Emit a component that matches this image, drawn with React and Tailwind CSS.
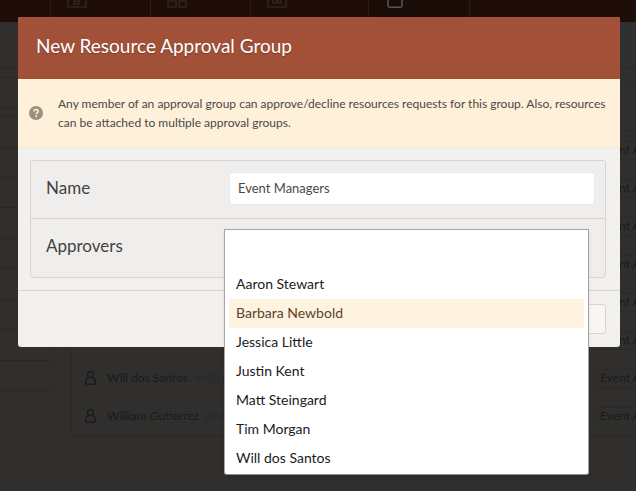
import React from "react";

const people = ["Aaron Stewart", "Barbara Newbold", "Jessica Little", "Justin Kent", "Matt Steingard", "Tim Morgan", "Will dos Santos"];

const rows = [
  {},
  {},
  {},
  {},
  {},
  {},
  { name: "Will dos Santos", email: "will@p" },
  { name: "William Gutierrez", email: "jlittl" },
];

const sideRows = ["h-[10px]", "h-[30px]", "h-[9px]", "h-[31px]", "h-[30px]", "h-[30px]", "h-[31px]", "h-[30px]", "h-[31px]", "h-[30px]", "h-[31px]", "h-[30px]", "h-[30px]"];

const UserIcon = () => (
  <svg width="11" height="14" viewBox="0 0 11 14" fill="none" stroke="#1a1918" strokeWidth="1.2" className="shrink-0">
    <ellipse cx="5.500" cy="3.600" rx="3" ry="3" />
    <path d="M3.200 6.800C1.500 7.600.6 8.800.6 10.700c0 1.600.8 2.700 2.200 2.700h5.400c1.400 0 2.200-1.100 2.200-2.700 0-1.900-.9-3.100-2.600-3.900" />
  </svg>
);

const TopIcon = ({ children, color = "#33241f", width = 20 }) => (
  <svg width={width} height="8" viewBox={`0 0 ${width} 8`} fill="none" stroke={color} strokeWidth="1.5">
    {children}
  </svg>
);

const HelpIcon = () => (
  <svg width="14" height="14" viewBox="0 0 14 14" className="shrink-0">
    <circle cx="7" cy="7" r="7" fill="#99917f" />
    <path d="M4.900 5.400c.1-1.200 1-1.900 2.200-1.900 1.200 0 2.100.7 2.100 1.800 0 1.700-2 1.500-2 3" fill="none" stroke="#fff0d9" strokeWidth="1.600" />
    <rect x="6.300" y="9.500" width="1.700" height="1.700" fill="#fff0d9" />
  </svg>
);

const Backdrop = () => (
  <div className="absolute inset-0 flex flex-col bg-[#302f2e]">
    {/* Top nav */}
    <div className="h-[22px] shrink-0 bg-[#1f0d07] flex">
      <div className="w-[51px] border-r border-[#2d1d17]" />
      <div className="w-[100px] border-r border-[#2d1d17] pl-[16px]">
        <TopIcon><path d="M1 0v7h18V0M7 1h5v3H7z" /></TopIcon>
      </div>
      <div className="w-[100px] border-r border-[#2d1d17] pl-[16px]">
        <TopIcon><path d="M1 1h8v6H1zM12 1h7v6h-7z" /></TopIcon>
      </div>
      <div className="w-[118px] border-r border-[#2d1d17] pl-[16px]">
        <TopIcon><path d="M1 0v7h18V0M6 0v3h3V0M11 0v3h3V0" /></TopIcon>
      </div>
      <div className="w-[101px] bg-[#1a0c07] border-r border-[#2d1d17] pl-[18px]">
        <TopIcon color="#5e5552" width={16}><path d="M1 0v5.500c0 1 .6 1.700 1.600 1.700h10.800c1 0 1.600-.7 1.600-1.700V0" /></TopIcon>
      </div>
    </div>
    <div className="flex-1 flex min-h-0">
      {/* Sidebar */}
      <div className="w-[51px] shrink-0 border-r border-[#2c2b2a] pt-[45px] flex flex-col">
        {sideRows.map((h, i) => (
          <div key={i} className={`${h} box-border border-t border-[#2a2928]`} />
        ))}
      </div>
      {/* Main table */}
      <div className="flex-1 min-w-0 flex flex-col pl-[20px]">
        <div className="h-[46px] shrink-0 -ml-[20px] border-b border-[#2a2a2a] bg-[#2f3031]" />
        <div className="h-[19px] shrink-0 -ml-[20px] border-b border-[#2a2a2a]" />
        <div className="h-[43px] shrink-0" />
        <div className="border border-r-0 border-[#2b2a29] flex flex-col text-[12px] text-[#1b1a19]">
          {rows.map((row, i) => (
            <div key={i} className="h-[38px] shrink-0 flex items-center pl-[13px] gap-[11px]">
              {row.name && <UserIcon />}
              {row.name && (
                <div className="flex gap-[6px] whitespace-nowrap">
                  <span>{row.name}</span>
                  <span className="text-[#282726]">{row.email}</span>
                </div>
              )}
              <div className="ml-auto w-[42px] h-[19px] border border-r-0 border-[#2b2a29] rounded-l-[2px] pl-[5px] flex items-center whitespace-nowrap">
                Event A
              </div>
            </div>
          ))}
        </div>
      </div>
    </div>
  </div>
);

export default function App() {
  return (
    <div className="relative w-[636px] h-[491px] overflow-hidden font-['Lato',sans-serif]">
      <Backdrop />
      {/* Modal */}
      <div className="absolute left-[18px] top-[17px] w-[602px] h-[330px] rounded-[3px] overflow-hidden bg-[#f2f1ef] flex flex-col">
        <div className="h-[62px] shrink-0 bg-[#a25038] pl-[18px] pb-[4px] flex items-center text-[19px] text-white [text-shadow:0_1px_1px_rgba(0,0,0,0.25)]">
          New Resource Approval Group
        </div>
        <div className="h-[69px] shrink-0 bg-[#fff0d9] border-b border-[#f3ebdd] flex items-center pl-[11px] pr-[12px] gap-[15px] text-[12px] leading-[19px] text-[#4a4846]">
          <HelpIcon />
          <p>Any member of an approval group can approve/decline resources requests for this group. Also, resources can be attached to multiple approval groups.</p>
        </div>
        <div className="pl-[12px] pr-[14px] pt-[12px]">
          <div className="border border-[#d6d5d3] rounded-[3px] bg-[#efeeec] text-[17px] text-[#444240]">
            <div className="h-[58px] border-b border-[#d6d5d3] flex items-center pl-[15px] pr-[10px]">
              <span className="w-[183px] pb-[3px]">Name</span>
              <div className="flex-1 h-[33px] mb-[2px] bg-white border border-[#e9e8e6] rounded-[3px] flex items-center pl-[8px] text-[13px] text-[#4a4846]">Event Managers</div>
            </div>
            <div className="h-[58px] flex items-center pl-[15px] pb-[5px]">Approvers</div>
          </div>
        </div>
        <div className="mt-[12px] border-t border-[#d6d5d3] flex-1 flex justify-end items-start pr-[14px] pt-[13px]">
          <div className="w-[40px] h-[30px] bg-[#f7f6f5] border border-[#d6d5d3] rounded-[3px]" />
        </div>
      </div>
      {/* Open select list */}
      <div className="absolute left-[224px] top-[229px] w-[365px] h-[246px] bg-white border border-[#a5a5a5] border-b-[#8f8f8f] rounded-b-[3px] shadow-sm px-[4px] pt-[40px] text-[14px] text-[#1b1b1b]">
        {people.map((name) => (
          <div key={name} className={`h-[29px] flex items-center px-[7px] pb-[2px] ${name === "Barbara Newbold" ? "bg-[#fef2e0] text-[#5f4325]" : ""}`}>
            {name}
          </div>
        ))}
      </div>
    </div>
  );
}
